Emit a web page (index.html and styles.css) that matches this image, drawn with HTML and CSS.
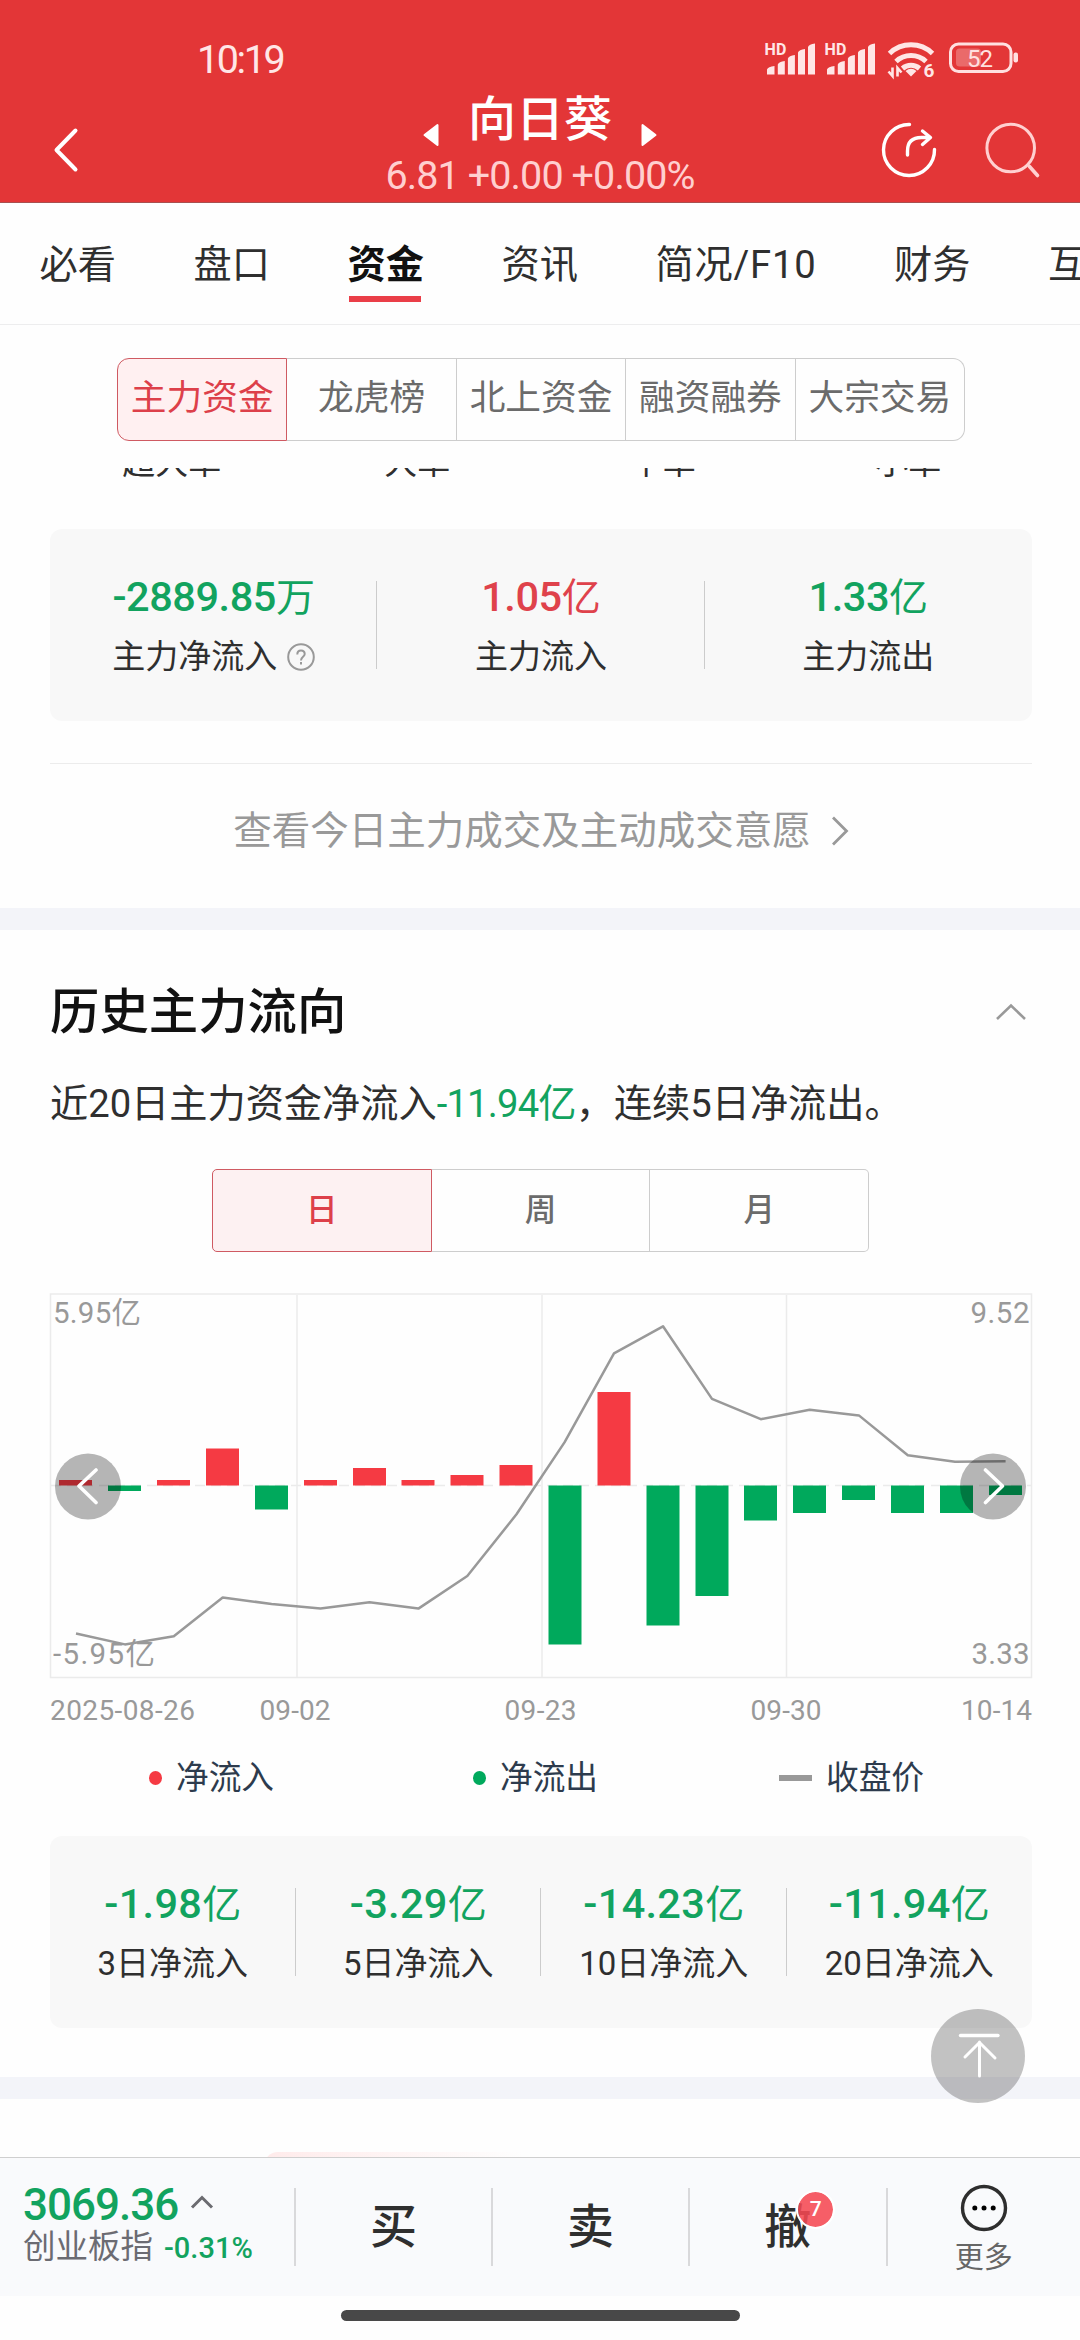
FILE: index.html
```html
<!DOCTYPE html>
<html lang="zh-CN">
<head>
<meta charset="utf-8">
<title>向日葵 资金</title>
<link rel="stylesheet" href="styles.css">
</head>
<body>
<div class="app">
  <header class="header">
    <div class="status">
      <span class="clock">10:19</span>
      <svg class="status-icons" width="260" height="44" viewBox="760 40 260 44">
        <g id="signal" fill="#ffe6e6">
          <text class="hd" x="764.500" y="56.700">HD</text>
          <path d="M767 76.500V71.500q1-3 7.500-3.500v8.500zM777.800 76.500V66.500q1-3 7-3.500v13.500zM787.900 76.500V60.500q1-3 7-3.500v19.500zM798 76.500V54.500q1-3 7-3.500v25.500zM808 76.500V49q1-3 7-3.500v31z"/>
        </g>
        <use href="#signal" x="60"/>
        <g fill="none" stroke="#ffe6e6" stroke-width="5">
          <path d="M889.500 55.500a31 31 0 0 1 43 0"/>
          <path d="M896 63.500a22 22 0 0 1 30 0"/>
          <path d="M902.500 70.500a13 13 0 0 1 17 0"/>
        </g>
        <path d="M905.500 73q5.500-4.500 11 0l-5.500 5.500z" fill="#ffe6e6"/>
        <path d="M892.500 69.500v8.500l-4-4.500M897.500 78.500v-8.500l4 4.500" fill="none" stroke="#ffe6e6" stroke-width="2.600"/>
        <text class="wifi-gen" x="923.500" y="79">6</text>
        <rect x="950.500" y="46" width="60.500" height="27.500" rx="8" fill="none" stroke="#ffe0e0" stroke-width="3"/>
        <rect x="956" y="50.500" width="25" height="18" rx="3.500" fill="#fff" fill-opacity=".26"/>
        <rect x="1013.500" y="54.500" width="4.500" height="10" rx="2" fill="#ffe0e0"/>
        <text class="battery" x="967" y="69" textLength="26">52</text>
      </svg>
    </div>
    <div class="titlebar">
      <svg class="back" width="40" height="50" viewBox="46 130 40 50"><path d="M75.500 135.500L56.500 155L75.500 174.500" fill="none" stroke="#fff" stroke-width="4" stroke-linecap="round" stroke-linejoin="round"/></svg>
      <div class="stock">
        <div class="stock-name">
          <svg class="tri" width="16" height="24" viewBox="0 0 16 24"><path d="M14.500 2v20L1.500 12z" fill="#fff" stroke="#fff" stroke-width="2" stroke-linejoin="round"/></svg>
          <h1>向日葵</h1>
          <svg class="tri" width="16" height="24" viewBox="0 0 16 24"><path d="M1.500 2v20L14.500 12z" fill="#fff" stroke="#fff" stroke-width="2" stroke-linejoin="round"/></svg>
        </div>
        <div class="quote">6.81 +0.00 +0.00%</div>
      </div>
      <svg class="tools" width="164" height="60" viewBox="880 125 164 60" fill="none" stroke-linecap="round" stroke-linejoin="round">
        <path d="M909.500 129.500A25.500 25.500 0 1 0 934.500 154.500" stroke="#fff" stroke-width="3.400"/>
        <path d="M907.500 160v-4q0-13.500 14-13.500h8M922.500 136l8 6.500-8 7" stroke="#fff" stroke-width="3.400"/>
        <circle cx="1010.700" cy="153" r="23.800" stroke="#ffd0d0" stroke-width="3"/>
        <path d="M1029.500 171.500l8 9" stroke="#ffd0d0" stroke-width="3.600"/>
      </svg>
    </div>
  </header>

  <nav class="tabs">
    <a class="tab">必看</a><a class="tab">盘口</a><a class="tab active">资金</a><a class="tab">资讯</a><a class="tab wide">简况/F10</a><a class="tab">财务</a><a class="tab">互</a>
  </nav>

  <div class="segments">
    <span class="seg on">主力资金</span><span class="seg">龙虎榜</span><span class="seg">北上资金</span><span class="seg">融资融券</span><span class="seg">大宗交易</span>
  </div>

  <main class="content">
    <div class="sizes"><span>超大单</span><span>大单</span><span>中单</span><span>小单</span></div>

    <section class="card today">
      <div class="cell">
        <b class="value down">-2889.85<i>万</i></b>
        <span class="label">主力净流入<svg class="help" width="28" height="28" viewBox="0 0 28 28" fill="none" stroke="#999" stroke-width="2"><circle cx="14" cy="14" r="12.800"/><path d="M10.300 11.500q0-4 3.700-4t3.700 3.600c0 2.800-3.700 2.700-3.700 6.300M14 19v2.400"/></svg></span>
      </div>
      <div class="cell"><b class="value up">1.05<i>亿</i></b><span class="label">主力流入</span></div>
      <div class="cell"><b class="value down">1.33<i>亿</i></b><span class="label">主力流出</span></div>
    </section>

    <a class="more-link">查看今日主力成交及主动成交意愿<svg width="18" height="32" viewBox="0 0 18 32"><path d="M2 2.500L15.500 16L2 29.500" fill="none" stroke="#999" stroke-width="2.800"/></svg></a>

    <section class="history">
      <div class="section-head">
        <h2>历史主力流向</h2>
        <svg width="32" height="18" viewBox="0 0 32 18"><path d="M2 16L16 2.500L30 16" fill="none" stroke="#999" stroke-width="2.600"/></svg>
      </div>
      <p class="summary">近20日主力资金净流入<em>-11.94亿</em>，连续5日净流出。</p>
      <div class="periods"><span class="seg on">日</span><span class="seg">周</span><span class="seg">月</span></div>

      <div class="chart">
        <svg width="1080" height="436" viewBox="0 1288 1080 436">
          <g fill="none" stroke="#ebebeb" stroke-width="1.500">
            <rect x="50.500" y="1293" width="981" height="383.500"/>
            <path d="M297 1294V1676M542 1294V1676M786.500 1294V1676"/>
            <path d="M51 1484.500H1031" stroke-dasharray="10 6"/>
          </g>
          <g fill="#f53a43">
            <rect x="59" y="1479" width="33" height="5.500"/>
            <rect x="157" y="1479" width="33" height="5.500"/>
            <rect x="206" y="1447.500" width="33" height="37"/>
            <rect x="304" y="1479" width="33" height="5.500"/>
            <rect x="353" y="1467" width="33" height="17.500"/>
            <rect x="401.500" y="1479" width="33" height="5.500"/>
            <rect x="450.500" y="1474" width="33" height="10.500"/>
            <rect x="499.500" y="1464" width="33" height="20.500"/>
            <rect x="597.500" y="1391" width="33" height="93.500"/>
          </g>
          <g fill="#00a95c">
            <rect x="108" y="1484.500" width="33" height="5.500"/>
            <rect x="255" y="1484.500" width="33" height="24"/>
            <rect x="548.500" y="1484.500" width="33" height="159"/>
            <rect x="646.500" y="1484.500" width="33" height="140"/>
            <rect x="695.500" y="1484.500" width="33" height="110.500"/>
            <rect x="744" y="1484.500" width="33" height="35"/>
            <rect x="793" y="1484.500" width="33" height="27.500"/>
            <rect x="842" y="1484.500" width="33" height="14.500"/>
            <rect x="891" y="1484.500" width="33" height="27.500"/>
            <rect x="940" y="1484.500" width="33" height="27.500"/>
            <rect x="989" y="1484.500" width="33" height="9.500"/>
          </g>
          <polyline fill="none" stroke="#999" stroke-width="2.500" stroke-linejoin="round" points="76,1632.500 124.900,1643.400 173.800,1635.300 222.700,1596.400 271.600,1603 320.500,1607.600 369.500,1601.300 418.400,1607.600 467.300,1575 516.500,1513.300 564.500,1441.400 614,1352.300 663,1325.300 712,1397.900 760.800,1418.200 809.700,1408.800 858.900,1414.400 907.800,1454.300 955,1460.700 1005.600,1460.200"/>
          <g class="axis">
            <text x="53" y="1322" textLength="88">5.95亿</text>
            <text x="53" y="1663" textLength="102">-5.95亿</text>
            <text x="970.500" y="1322" textLength="59">9.52</text>
            <text x="971.500" y="1663" textLength="58">3.33</text>
          </g>
          <g class="dates">
            <text x="50" y="1718.500" textLength="145">2025-08-26</text>
            <text x="259.500" y="1718.500" textLength="71">09-02</text>
            <text x="504.500" y="1718.500" textLength="72">09-23</text>
            <text x="750.500" y="1718.500" textLength="71">09-30</text>
            <text x="961" y="1718.500" textLength="71">10-14</text>
          </g>
          <circle cx="88" cy="1485.500" r="33" fill-opacity=".285"/>
          <circle cx="993" cy="1485.500" r="33" fill-opacity=".285"/>
          <path d="M96 1469L79 1485L96 1501.500M985.500 1469L1002.500 1485L985.500 1501.500" fill="none" stroke="#fff" stroke-width="3.600" stroke-linecap="round" stroke-linejoin="round"/>
        </svg>
      </div>

      <div class="legend">
        <span class="key"><i class="dot in"></i>净流入</span>
        <span class="key"><i class="dot out"></i>净流出</span>
        <span class="key"><i class="dash"></i>收盘价</span>
      </div>

      <div class="card totals">
        <div class="cell"><b class="value down">-1.98<i>亿</i></b><span class="label">3日净流入</span></div>
        <div class="cell"><b class="value down">-3.29<i>亿</i></b><span class="label">5日净流入</span></div>
        <div class="cell"><b class="value down">-14.23<i>亿</i></b><span class="label">10日净流入</span></div>
        <div class="cell"><b class="value down">-11.94<i>亿</i></b><span class="label">20日净流入</span></div>
      </div>
    </section>
    <div class="next"><div class="promo"></div></div>
  </main>

  <footer class="dock">
    <div class="index">
      <div class="index-top"><b>3069.36</b><svg width="24" height="14" viewBox="0 0 24 14"><path d="M2 12.500L12 2.500L22 12.500" fill="none" stroke="#6b6b70" stroke-width="3"/></svg></div>
      <div class="index-sub"><span>创业板指</span><b>-0.31%</b></div>
    </div>
    <div class="action">买</div>
    <div class="action">卖</div>
    <div class="action"><span class="cancel">撤<i class="badge">7</i></span></div>
    <div class="action more">
      <svg width="48" height="48" viewBox="0 0 48 48"><circle cx="24" cy="24" r="21.500" fill="none" stroke="#2e2e2e" stroke-width="3.400"/><circle cx="14.800" cy="24" r="2.500"/><circle cx="24" cy="24" r="2.500"/><circle cx="33.200" cy="24" r="2.500"/></svg>
      <span>更多</span>
    </div>
  </footer>
  <div class="home"><i></i></div>

  <button class="to-top" aria-label="返回顶部">
    <svg width="94" height="94" viewBox="0 0 94 94" fill="none" stroke="#fff" stroke-linecap="round" stroke-linejoin="round"><path d="M29.500 26.500H67" stroke-width="3.400"/><path d="M48.500 33V67M34 48L48.500 33.500L64 49" stroke-width="3"/></svg>
  </button>
</div>
</body>
</html>
```

FILE: styles.css
```css
* { box-sizing: border-box; }
body {
  margin: 0;
  background: #fff;
  color: #2f2f2f;
  font-family: Roboto, "Noto Sans CJK SC", sans-serif;
}
h1, h2, p { margin: 0; }
i, em { font-style: normal; }
svg { display: block; flex: none; }

.app {
  position: relative;
  display: flex;
  flex-direction: column;
  width: 1080px;
  height: 2340px;
  overflow: hidden;
  background: #fefefe;
}

/* header */
.header { flex: none; height: 203px; background: #e33637; color: #fff; border-bottom: 1px solid #a85050; }
.status {
  display: flex;
  justify-content: space-between;
  height: 92px;
  padding: 38px 60px 0 197px;
}
.clock { font-size: 39.500px; line-height: 43px; letter-spacing: -2.4px; color: #ffe6e6; }
.hd { font: 700 16px Roboto, sans-serif; letter-spacing: .3px; }
.wifi-gen { font: 700 19px Roboto, sans-serif; fill: #ffe6e6; }
.battery { font: 24px Roboto, sans-serif; fill: #ffe0e0; }
.titlebar { display: grid; grid-template-columns: 1fr auto 1fr; height: 110px; }
.back { margin: 33px 0 0 46px; }
.stock { display: flex; flex-direction: column; align-items: center; }
.stock-name { display: flex; height: 62px; gap: 29px; }
.stock-name h1 { font-size: 48px; font-weight: 500; line-height: 55px; }
.tri { margin-top: 31px; }
.quote { font-size: 39.500px; line-height: 44px; letter-spacing: -.9px; color: #ffcfcf; white-space: nowrap; }
.tools { justify-self: end; margin: 28px 36px 0 0; }

/* tabs */
.tabs {
  display: flex;
  gap: 77.500px;
  height: 122px;
  flex: none;
  padding-left: 39.500px;
  border-bottom: 1.500px solid #ededee;
  font-size: 38.200px;
  line-height: 125px;
  white-space: nowrap;
  overflow: hidden;
}
.tab { display: flex; flex-direction: column; flex: none; width: 76.500px; }
.tab.wide { width: 161px; letter-spacing: .8px; }
.active { font-weight: 700; color: #111; }
.active::after { content: ""; width: 72px; height: 6px; margin: -32px 0 0 1px; background: #ea3e48; }

/* segmented controls */
.segments, .periods { display: flex; flex: none; line-height: 40px; }
.segments { height: 83px; margin: 33px 115px 27px 117px; font-size: 35.700px; }
.seg {
  flex: 1;
  display: flex;
  align-items: center;
  justify-content: center;
  border: 1.500px solid #cdcdcd;
  border-left-width: 0;
  color: #6b6b6b;
}
.segments .seg { padding-bottom: 3px; }
.segments .seg:first-child { border-radius: 12px 0 0 12px; }
.segments .seg:last-child { border-radius: 0 12px 12px 0; }
.seg.on { border: 1.500px solid #cf5a62; background: #fff0f1; color: #dd404a; }

.content { flex: 1; min-height: 0; overflow: hidden; }

/* bottom edge of the scrolled-away chart labels */
.sizes {
  display: grid;
  grid-template-columns: repeat(4, 1fr);
  align-items: end;
  height: 11px;
  margin: 0 49px 50px;
  overflow: hidden;
  font-size: 33px;
  line-height: 33px;
  text-align: center;
}
.sizes span { margin-top: -22px; }

/* stat cards */
.card { display: flex; height: 192px; margin: 0 48px 0 50px; border-radius: 12px; background: #f8f8f8; }
.cell {
  position: relative;
  flex: 1;
  display: flex;
  flex-direction: column;
  align-items: center;
}
.cell + .cell::before { content: ""; position: absolute; left: -1px; top: 52px; width: 1px; height: 88px; background: #ccc; }
.value { margin-top: 43px; height: 50px; font-size: 41.500px; font-weight: 500; line-height: 50px; letter-spacing: -.45px; }
.value i { font-size: 39px; font-weight: 400; letter-spacing: 0; }
.label { display: flex; align-items: center; gap: 10px; margin-top: 14px; font-size: 33px; line-height: 42px; }
.down, .summary em { color: #12a35f; }
.up { color: #df424b; }
.totals .value { letter-spacing: .3px; }

.more-link {
  display: flex;
  align-items: center;
  justify-content: center;
  gap: 20px;
  height: 145px;
  margin: 42px 48px 0 50px;
  padding-bottom: 11px;
  border-top: 1.500px solid #ececec;
  font-size: 38.500px;
  line-height: 40px;
  color: #999;
}

/* history */
.history { height: 1191px; border-top: 22px solid #f3f4f9; border-bottom: 22px solid #f3f4f9; }
.section-head { display: flex; align-items: center; justify-content: space-between; height: 73px; margin: 45px 53px 0 50px; }
.section-head h2 { font-size: 49.400px; font-weight: 500; line-height: 60px; color: #111; }
.summary { margin: 26px 0 0 50px; font-size: 38.200px; line-height: 60px; white-space: nowrap; }
.summary em { letter-spacing: -.8px; }
.periods { height: 83px; margin: 35px 211px 0 212px; font-size: 31.500px; font-weight: 500; }
.periods .seg:first-child { border-radius: 5px 0 0 5px; background: #fdf1f2; }
.periods .seg:last-child { border-radius: 0 5px 5px 0; }
.chart { margin-top: 37px; }
.axis { font: 29.500px Roboto, "Noto Sans CJK SC", sans-serif; fill: #999; }
.dates { font: 28px Roboto, sans-serif; fill: #999; }

.legend { display: grid; grid-template-columns: 324px 306px auto; height: 111px; padding: 32px 0 0 149px; font-size: 32.700px; line-height: 42px; color: #2d3b4d; }
.key { display: flex; align-items: center; height: 42px; }
.dot { width: 13px; height: 14px; margin-right: 14px; border-radius: 50%; }
.in { background: #f53a43; }
.out { background: #00a95c; }
.dash { width: 33px; height: 6px; margin-right: 14px; background: #999; }

.next { height: 60px; padding-top: 53px; }
.promo { width: 260px; height: 30px; margin-left: 264px; border-radius: 14px 0 0 0; background: linear-gradient(90deg, #ffebeb, #fefefe); }

/* bottom bar */
.dock {
  display: grid;
  grid-template-columns: 294px 197px 197px 197.500px 1fr;
  flex: none;
  height: 139px;
  border-top: 1.500px solid #cfcfcf;
  background: #f9fafc;
}
.index { padding: 23px 0 0 23px; white-space: nowrap; }
.index b { color: #12a35f; }
.index-top { display: flex; gap: 12px; height: 48px; }
.index-top b { font-size: 44px; font-weight: 500; line-height: 48px; letter-spacing: -1px; }
.index-top svg { margin-top: 14px; }
.index-sub { display: flex; align-items: baseline; gap: 11px; font-size: 32.500px; line-height: 36px; color: #6b6b72; }
.index-sub b { font-size: 29px; font-weight: 500; }
.action {
  position: relative;
  display: flex;
  justify-content: center;
  padding: 27px 0 0 2px;
  font-size: 47px;
  font-weight: 500;
  line-height: 84px;
}
.action::before { content: ""; position: absolute; left: 0; top: 30px; width: 2px; height: 78px; background: #d9d9db; }
.cancel { position: relative; }
.badge {
  position: absolute;
  left: 32px;
  top: 5px;
  width: 39px;
  height: 39px;
  border: 2px solid #fff;
  border-radius: 50%;
  background: rgba(245, 72, 82, .88);
  background-clip: padding-box;
  color: #fff;
  font-size: 21px;
  line-height: 34px;
  text-align: center;
}
.more { flex-direction: column; justify-content: flex-start; align-items: center; padding-top: 26px; font-size: 29px; font-weight: 400; color: #666; }
.more span { margin-top: 6px; line-height: 40px; }
.home { flex: none; display: flex; justify-content: center; height: 44px; padding-top: 14px; }
.home i { width: 399px; height: 11px; border-radius: 6px; background: #484848; }

.to-top {
  position: absolute;
  left: 931px;
  top: 2009px;
  width: 94px;
  height: 94px;
  padding: 0;
  border: 0;
  border-radius: 50%;
  background: rgba(0, 0, 0, .235);
}
```
